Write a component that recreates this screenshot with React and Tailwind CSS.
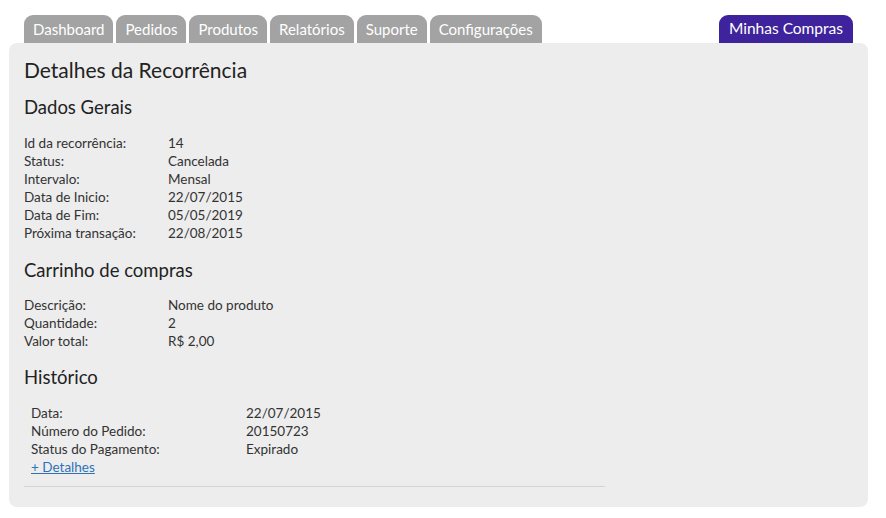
const tabs = ["Dashboard", "Pedidos", "Produtos", "Relatórios", "Suporte", "Configurações"];

const dadosGerais = [
  ["Id da recorrência:", "14"],
  ["Status:", "Cancelada"],
  ["Intervalo:", "Mensal"],
  ["Data de Inicio:", "22/07/2015"],
  ["Data de Fim:", "05/05/2019"],
  ["Próxima transação:", "22/08/2015"],
];

const carrinho = [
  ["Descrição:", "Nome do produto"],
  ["Quantidade:", "2"],
  ["Valor total:", "R$ 2,00"],
];

const historico = [
  ["Data:", "22/07/2015"],
  ["Número do Pedido:", "20150723"],
  ["Status do Pagamento:", "Expirado"],
];

function InfoRows({ rows, labelWidth }) {
  return (
    <div>
      {rows.map(([label, value]) => (
        <div key={label} className="flex h-[18px] items-center text-[13.5px] text-[#333]">
          <span className={labelWidth}>{label}</span>
          <span>{value}</span>
        </div>
      ))}
    </div>
  );
}

export default function App() {
  return (
    <div className="min-h-[518px] bg-white pl-[9px] pr-[18px] pt-[15px] font-['Lato',sans-serif]">
      <div className="flex items-end justify-between px-[15px]">
        <div className="flex gap-[3px]">
          {tabs.map((tab) => (
            <div key={tab} className="flex h-[28px] items-center rounded-t-[9px] bg-[#a3a3a3] px-[9px] text-[15px] text-white">
              {tab}
            </div>
          ))}
        </div>
        <div className="flex h-[28px] items-center rounded-t-[9px] bg-[#3f239c] px-[10px] text-[15.5px] text-white">
          Minhas Compras
        </div>
      </div>

      <div className="rounded-[8px] bg-[#ededed] px-[15px] pb-[20px] pt-[15px] text-[#222]">
        <h1 className="text-[21px] leading-[24px]">Detalhes da Recorrência</h1>

        <h2 className="mt-[14px] text-[18.5px] leading-[22px]">Dados Gerais</h2>
        <div className="mt-[16px]">
          <InfoRows rows={dadosGerais} labelWidth="w-[144px]" />
        </div>

        <h2 className="mt-[17px] text-[18.5px] leading-[22px]">Carrinho de compras</h2>
        <div className="mt-[15px]">
          <InfoRows rows={carrinho} labelWidth="w-[144px]" />
        </div>

        <h2 className="mt-[16px] text-[18.5px] leading-[22px]">Histórico</h2>
        <div className="mt-[16px] w-[581px] border-b border-[#d4d4d4] pb-[10px] pl-[7px]">
          <InfoRows rows={historico} labelWidth="w-[215px]" />
          <a href="#" className="flex h-[18px] items-center text-[13.5px] text-[#2f72b8] underline">
            + Detalhes
          </a>
        </div>
      </div>
    </div>
  );
}
